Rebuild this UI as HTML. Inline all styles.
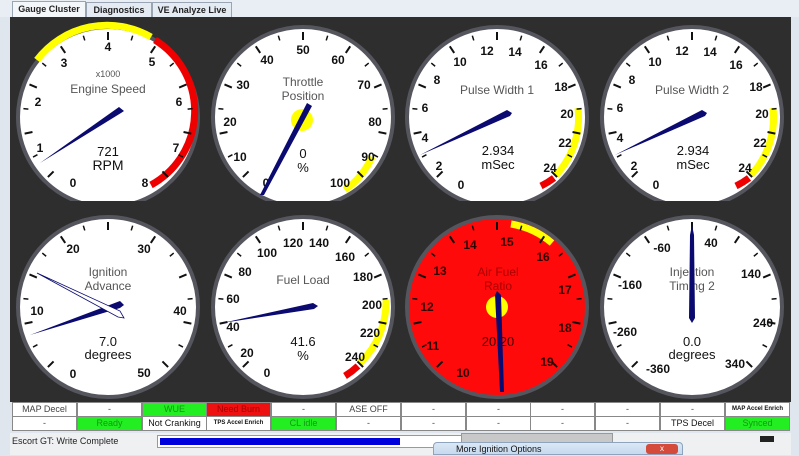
<!DOCTYPE html>
<html><head><style>
body{margin:0;width:799px;height:455px;overflow:hidden;background:#dfe6ee;font-family:"Liberation Sans",sans-serif;position:relative}
.tab{position:absolute;top:2px;height:15px;font-size:9px;font-weight:bold;line-height:15px;text-align:center;border:1px solid #9aa5b4;border-bottom:none;background:#e4ebf3;color:#222}
#panel{position:absolute;left:10px;top:17px;width:781px;height:385px;background:#2e2e2e}
.cell{position:absolute;height:13px;width:63px;background:#fff;border:1px solid #888;font-size:9px;line-height:13px;text-align:center;color:#444;white-space:nowrap;overflow:hidden}
.g{background:#22ee22;color:#119911}.r{background:#ee1111;color:#aa0000}.s{font-size:6px;font-weight:bold;color:#111}
</style></head><body>
<div style="position:absolute;left:0;top:0;width:799px;height:17px;background:#e9eef4"></div>
<div class="tab" style="left:12px;width:72px;background:#f4f7fa;top:1px;height:16px">Gauge Cluster</div>
<div class="tab" style="left:86px;width:64px">Diagnostics</div>
<div class="tab" style="left:152px;width:78px">VE Analyze Live</div>
<div id="panel"></div>
<svg id="sv" width="799" height="455" style="position:absolute;left:0;top:0" font-family="Liberation Sans, sans-serif" text-anchor="middle">
<defs>
<clipPath id="c1"><rect x="10" y="17" width="781" height="184"/></clipPath>
<clipPath id="c2"><rect x="10" y="205" width="781" height="195"/></clipPath>
</defs>
<g id="faces"></g>
<g fill="none" stroke-width="7" clip-path="url(#c1)">
<path d="M37 60 A88 88 0 0 1 151 37" stroke="#ffff00"/>
<path d="M155 40 A84 84 0 0 1 151 185" stroke="#ee0000"/>
<path d="M372 157 A84 84 0 0 1 345 190" stroke="#ffff00"/>
<path d="M578 108 A84 84 0 0 1 556 175" stroke="#ffff00"/>
<path d="M554 178 A84 84 0 0 1 541 186" stroke="#ee0000"/>
<path d="M773 108 A84 84 0 0 1 751 175" stroke="#ffff00"/>
<path d="M749 178 A84 84 0 0 1 736 186" stroke="#ee0000"/>
</g>
<g fill="none" stroke-width="7" clip-path="url(#c2)">
<path d="M386 300 A84 84 0 0 1 360 363" stroke="#ffff00"/>
<path d="M358 366 A84 84 0 0 1 345 376" stroke="#ee0000"/>
<path d="M511 224 A84 84 0 0 1 552 243" stroke="#ffff00"/>
</g>
<g id="ticks"></g>
<g font-size="12" font-weight="bold" fill="#111">
<text x="73" y="187">0</text><text x="40" y="152">1</text><text x="38" y="106">2</text><text x="64" y="67">3</text><text x="108" y="51">4</text><text x="152" y="66">5</text><text x="179" y="106">6</text><text x="176" y="152">7</text><text x="145" y="187">8</text>
<text x="266" y="187">0</text><text x="240" y="161">10</text><text x="230" y="126">20</text><text x="243" y="89">30</text><text x="267" y="64">40</text><text x="303" y="54">50</text><text x="338" y="64">60</text><text x="364" y="89">70</text><text x="375" y="126">80</text><text x="368" y="161">90</text><text x="340" y="187">100</text>
<g id="pw"><text x="461" y="189">0</text><text x="439" y="170">2</text><text x="425" y="142">4</text><text x="425" y="112">6</text><text x="437" y="84">8</text><text x="460" y="66">10</text><text x="487" y="55">12</text><text x="515" y="56">14</text><text x="541" y="69">16</text><text x="561" y="91">18</text><text x="567" y="118">20</text><text x="565" y="147">22</text><text x="550" y="172">24</text></g>
<use href="#pw" x="195"/>
<text x="73" y="253">20</text><text x="144" y="253">30</text><text x="37" y="315">10</text><text x="180" y="315">40</text><text x="73" y="378">0</text><text x="144" y="377">50</text>
<text x="267" y="377">0</text><text x="247" y="357">20</text><text x="233" y="331">40</text><text x="233" y="303">60</text><text x="245" y="276">80</text><text x="267" y="257">100</text><text x="293" y="247">120</text><text x="319" y="247">140</text><text x="345" y="261">160</text><text x="363" y="281">180</text><text x="372" y="309">200</text><text x="370" y="337">220</text><text x="355" y="361">240</text>
<g fill="#300"><text x="463" y="377">10</text><text x="433" y="350">11</text><text x="427" y="311">12</text><text x="440" y="275">13</text><text x="470" y="249">14</text><text x="507" y="246">15</text><text x="543" y="261">16</text><text x="565" y="294">17</text><text x="565" y="332">18</text><text x="547" y="366">19</text></g>
<text x="662" y="252">-60</text><text x="711" y="247">40</text><text x="751" y="278">140</text><text x="763" y="327">240</text><text x="735" y="368">340</text><text x="658" y="373">-360</text><text x="625" y="336">-260</text><text x="630" y="289">-160</text>
</g>
<g font-size="12" fill="#555">
<text x="108" y="77" font-size="9">x1000</text><text x="108" y="93">Engine Speed</text>
<text x="303" y="86">Throttle</text><text x="303" y="100">Position</text>
<text x="497" y="94">Pulse Width 1</text><text x="692" y="94">Pulse Width 2</text>
<text x="108" y="276">Ignition</text><text x="108" y="290">Advance</text>
<text x="303" y="284">Fuel Load</text>
<text x="498" y="276" fill="#a00">Air Fuel</text><text x="498" y="290" fill="#a00">Ratio</text>
<text x="692" y="276">Injection</text><text x="692" y="290">Timing 2</text>
</g>
<circle cx="302" cy="120" r="11" fill="#ffff00"/>
<circle cx="497" cy="307" r="11" fill="#ffff00"/>
<g font-size="13" fill="#111">
<text x="108" y="156">721</text><text x="108" y="170" font-size="14">RPM</text>
<text x="303" y="158">0</text><text x="303" y="172">%</text>
<text x="498" y="155">2.934</text><text x="498" y="169">mSec</text>
<text x="693" y="155">2.934</text><text x="693" y="169">mSec</text>
<text x="108" y="346">7.0</text><text x="108" y="359">degrees</text>
<text x="303" y="346">41.6</text><text x="303" y="360">%</text>
<text x="498" y="346" fill="#400">20.20</text>
<text x="692" y="346">0.0</text><text x="692" y="359">degrees</text>
</g>
<g fill="#0a0a70">
<polygon points="40,163 119,107 124,111 121,113"/>
<polygon points="260,195 307,103 312,106 264,195"/>
<polygon points="420,155 507,110 512,113 510,116"/>
<polygon points="615,155 702,110 707,113 705,116"/>
<polygon points="30,335 120,301 124,305 120,308"/>
<polygon points="222,323 313,303 318,306 314,309"/>
<polygon points="495,295 497,291 501,295 504,392 500,392"/>
<polygon points="690,235 692,225 694,235 695,318 692,323 689,318"/>
</g>
<polygon points="37,273 120,311 124,318 118,317" fill="#fff" stroke="#0a0a70" stroke-width="0.8"/>
</svg>
<div class="cell" style="left:12px;top:402px">MAP Decel</div><div class="cell" style="left:77px;top:402px">-</div><div class="cell g" style="left:142px;top:402px">WUE</div><div class="cell r" style="left:206px;top:402px">Need Burn</div><div class="cell" style="left:271px;top:402px">-</div><div class="cell" style="left:336px;top:402px">ASE OFF</div><div class="cell" style="left:401px;top:402px">-</div><div class="cell" style="left:466px;top:402px">-</div><div class="cell" style="left:530px;top:402px">-</div><div class="cell" style="left:595px;top:402px">-</div><div class="cell" style="left:660px;top:402px">-</div><div class="cell s" style="left:725px;top:402px">MAP Accel Enrich</div>
<div class="cell" style="left:12px;top:416px">-</div><div class="cell g" style="left:77px;top:416px">Ready</div><div class="cell" style="left:142px;top:416px;color:#111">Not Cranking</div><div class="cell s" style="left:206px;top:416px">TPS Accel Enrich</div><div class="cell g" style="left:271px;top:416px">CL idle</div><div class="cell" style="left:336px;top:416px">-</div><div class="cell" style="left:401px;top:416px">-</div><div class="cell" style="left:466px;top:416px">-</div><div class="cell" style="left:530px;top:416px">-</div><div class="cell" style="left:595px;top:416px">-</div><div class="cell" style="left:660px;top:416px;color:#111">TPS Decel</div><div class="cell g" style="left:725px;top:416px">Synced</div>
<div style="position:absolute;left:10px;top:433px;width:781px;height:22px;background:#eef0f2"></div>
<div style="position:absolute;left:12px;top:436px;font-size:9px;color:#222">Escort GT: Write Complete</div>
<div style="position:absolute;left:157px;top:435px;width:303px;height:11px;border:1px solid #999;background:#fff"><div style="margin:2px;height:7px;background:#0000dd;width:240px"></div></div>
<div style="position:absolute;left:461px;top:433px;width:150px;height:10px;background:#c8c8c8;border:1px solid #999"></div>
<div style="position:absolute;left:760px;top:436px;width:14px;height:6px;background:#222"></div>
<div style="position:absolute;left:433px;top:442px;width:250px;height:13px;background:linear-gradient(#dbe8f5,#c6d9ee);border:1px solid #8ea3bd;border-radius:4px 4px 0 0;font-size:9px;line-height:13px;padding-left:22px;box-sizing:border-box;color:#111">More Ignition Options
<div style="position:absolute;right:4px;top:1px;width:32px;height:10px;background:#d44b3c;border-radius:3px;color:#fff;font-size:8px;text-align:center;line-height:10px">x</div></div>
<script>
var ns="http://www.w3.org/2000/svg",F=document.getElementById("faces"),T=document.getElementById("ticks");
var G=[[108,117,"#fff",1],[303,117,"#fff",1],[497,117,"#fff",1],[692,117,"#fff",1],[108,307,"#fff",2],[303,307,"#fff",2],[497,307,"#ff0a0a",2],[692,307,"#fff",2]];
G.forEach(function(g){var c=document.createElementNS(ns,"circle");c.setAttribute("cx",g[0]);c.setAttribute("cy",g[1]);c.setAttribute("r",90);c.setAttribute("fill",g[2]);c.setAttribute("stroke","#55555e");c.setAttribute("stroke-width",4);c.setAttribute("clip-path","url(#c"+g[3]+")");F.appendChild(c);
for(var i=0;i<=16;i++){var a=-135+i*16.875,r=a*Math.PI/180,m=(i%2==0),r1=m?77:80,r2=85;var l=document.createElementNS(ns,"line");l.setAttribute("x1",g[0]+r1*Math.sin(r));l.setAttribute("y1",g[1]-r1*Math.cos(r));l.setAttribute("x2",g[0]+r2*Math.sin(r));l.setAttribute("y2",g[1]-r2*Math.cos(r));l.setAttribute("stroke","#111");l.setAttribute("stroke-width",m?2:1.5);l.setAttribute("clip-path","url(#c"+g[3]+")");T.appendChild(l);}});
</script>
</body></html>
